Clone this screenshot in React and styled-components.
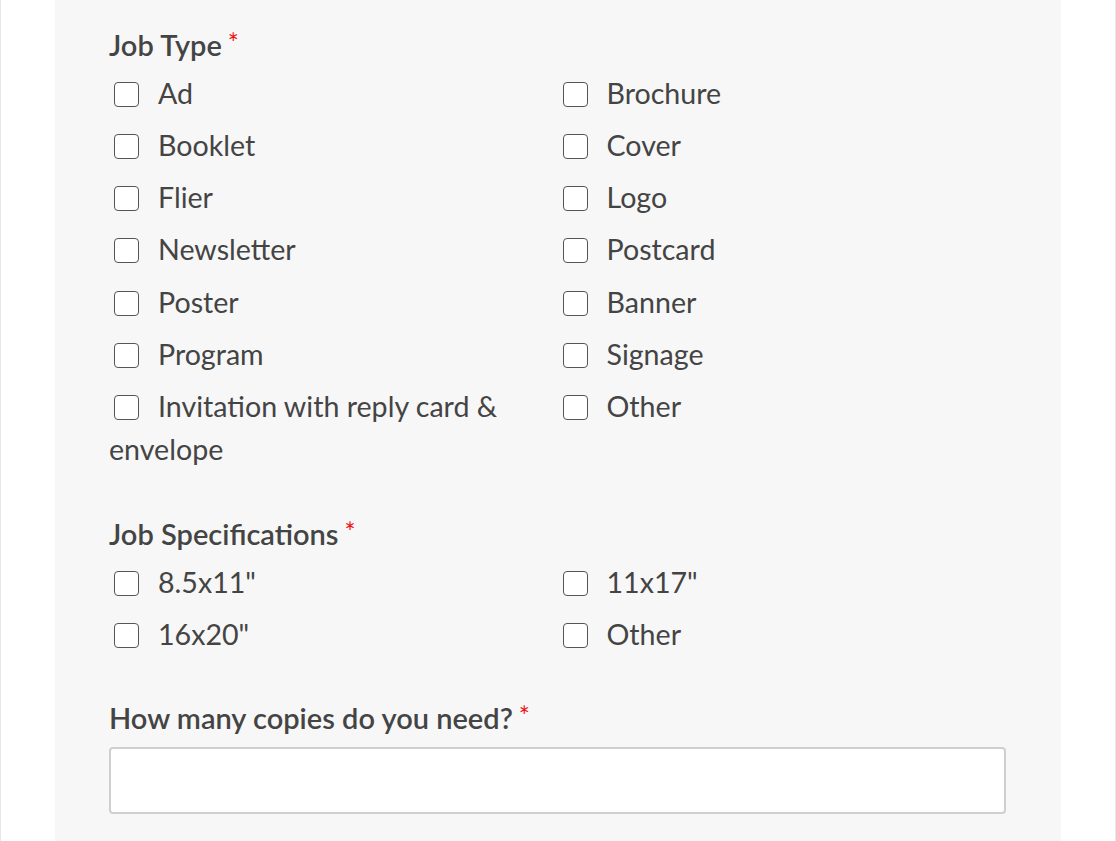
import React from "react";
import styled, { createGlobalStyle } from "styled-components";

const GlobalStyle = createGlobalStyle`
  html, body {
    margin: 0;
    padding: 0;
    background: #ffffff;
    font-family: "Lato", "Noto Sans", sans-serif;
  }
`;

const Page = styled.div`
  box-sizing: border-box;
  width: 1116px;
  min-height: 841px;
  border-left: 1px solid #e8e8e8;
  border-right: 1px solid #e8e8e8;
  padding-left: 54px;
  overflow: hidden;
`;

const Panel = styled.form`
  box-sizing: border-box;
  width: 1006px;
  min-height: 841px;
  background: #f7f7f7;
  padding: 28px 55px 0 54px;
`;

const Field = styled.div`
  margin-bottom: ${(p) => p.$space || 46}px;
`;

const Label = styled.div`
  font-size: 29px;
  line-height: 34px;
  font-weight: 600;
  color: #444444;
  margin-bottom: 9.5px;
`;

const Required = styled.span`
  color: #ee1111;
  font-size: 26px;
  font-weight: 400;
  vertical-align: top;
  line-height: 20px;
  margin-left: 6px;
  position: relative;
  top: 5px;
`;

const Options = styled.div`
  display: grid;
  grid-template-columns: 1fr 1fr;
  row-gap: 9.33px;
`;

const Option = styled.label`
  display: block;
  font-size: 28.6px;
  line-height: 43px;
  color: #444444;
  padding-right: 50px;
`;

const Box = styled.span`
  display: inline-block;
  box-sizing: border-box;
  width: 25px;
  height: 25px;
  border: 1.6px solid #555555;
  border-radius: 4px;
  background: #ffffff;
  vertical-align: -3px;
  margin: 0 19px 0 5px;
`;

const Input = styled.input`
  display: block;
  box-sizing: border-box;
  width: 100%;
  height: 67px;
  border: 2px solid #cfcfcf;
  border-radius: 4px;
  background: #ffffff;
  margin-top: 12px;
  padding: 0 14px;
  font: inherit;
  font-size: 22px;
  outline: none;
`;

const jobTypes = [
  "Ad",
  "Brochure",
  "Booklet",
  "Cover",
  "Flier",
  "Logo",
  "Newsletter",
  "Postcard",
  "Poster",
  "Banner",
  "Program",
  "Signage",
  "Invitation with reply card & envelope",
  "Other",
];

const specs = ['8.5x11"', '11x17"', '16x20"', "Other"];

function CheckGroup({ items }) {
  return (
    <Options>
      {items.map((item, i) => (
        <Option key={i}>
          <Box />
          {item}
        </Option>
      ))}
    </Options>
  );
}

export default function App() {
  return (
    <>
      <GlobalStyle />
      <Page>
        <Panel onSubmit={(e) => e.preventDefault()}>
          <Field>
            <Label>
              Job Type<Required>*</Required>
            </Label>
            <CheckGroup items={jobTypes} />
          </Field>
          <Field $space={45}>
            <Label>
              Job Specifications<Required>*</Required>
            </Label>
            <CheckGroup items={specs} />
          </Field>
          <Field>
            <Label as="label">
              How many copies do you need?<Required>*</Required>
            </Label>
            <Input type="text" />
          </Field>
        </Panel>
      </Page>
    </>
  );
}
